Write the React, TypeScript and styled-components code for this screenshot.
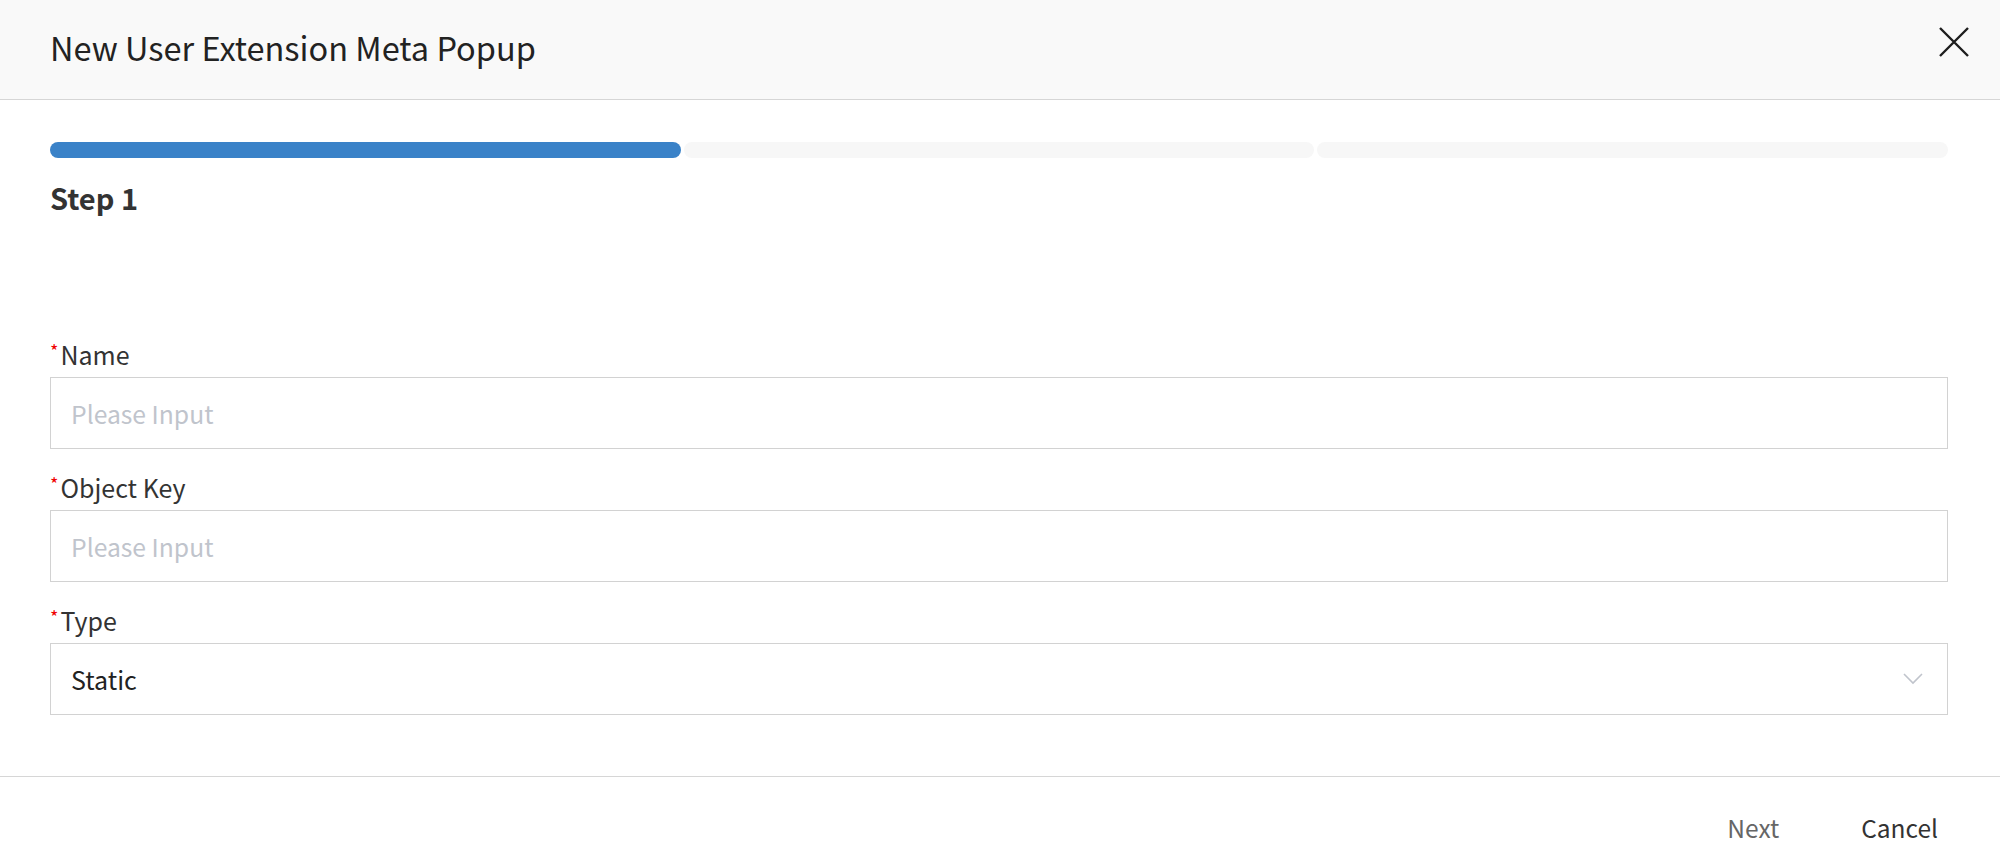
import React from "react";
import styled, { createGlobalStyle } from "styled-components";

const GlobalStyle = createGlobalStyle`
  html, body {
    margin: 0;
    padding: 0;
    background: #ffffff;
  }
  body {
    font-family: "Noto Sans CJK KR", "Noto Sans", sans-serif;
    color: #333333;
  }
  * { box-sizing: border-box; }
`;

const Modal = styled.div`
  width: 100%;
  min-height: 100vh;
  display: flex;
  flex-direction: column;
  background: #ffffff;
`;

const Header = styled.header`
  height: 100px;
  flex: none;
  display: flex;
  align-items: center;
  justify-content: space-between;
  padding: 0 30px 0 50px;
  background: #f9f9f9;
  border-bottom: 1px solid #d6d6d6;
`;

const Title = styled.h1`
  margin: 0 0 5px;
  font-size: 32.5px;
  font-weight: 400;
  color: #222222;
  line-height: 1;
`;

const CloseButton = styled.button`
  width: 32px;
  height: 32px;
  padding: 0;
  border: none;
  background: transparent;
  cursor: pointer;
  display: flex;
  align-items: center;
  justify-content: center;
  margin-top: -16px;
`;

const Body = styled.main`
  padding: 42px 52px 0 50px;
  display: flex;
  flex-direction: column;
`;

const Progress = styled.div`
  display: grid;
  grid-template-columns: repeat(3, 1fr);
  gap: 3px;
`;

const Segment = styled.div<{ $active?: boolean }>`
  height: 16px;
  border-radius: 8px;
  background: ${(p) => (p.$active ? "#3a82c8" : "#f7f7f7")};
`;

const StepTitle = styled.h2`
  margin: 21px 0 0;
  font-size: 29px;
  font-weight: 700;
  color: #333333;
  line-height: 36px;
`;

const Form = styled.form`
  margin-top: 124px;
  display: flex;
  flex-direction: column;
  gap: 23px;
`;

const Field = styled.div`
  display: flex;
  flex-direction: column;
  gap: 8px;
`;

const Label = styled.label`
  font-size: 25px;
  line-height: 30px;
  color: #333333;
  display: flex;
  align-items: flex-start;
`;

const Required = styled.span`
  color: #f00000;
  font-size: 18px;
  line-height: 18px;
  margin-right: 2px;
  margin-top: 2px;
`;

const Input = styled.input`
  height: 72px;
  width: 100%;
  border: 1px solid #d2d2d2;
  border-radius: 0;
  padding: 0 20px;
  font-family: inherit;
  font-size: 24.7px;
  color: #222222;
  outline: none;
  background: #ffffff;
  &::placeholder {
    color: #c0c4cc;
  }
`;

const Select = styled.div`
  height: 72px;
  border: 1px solid #d2d2d2;
  padding: 0 24px 0 20px;
  display: flex;
  align-items: center;
  justify-content: space-between;
  font-size: 25px;
  color: #222222;
  background: #ffffff;
`;

const Footer = styled.footer`
  margin-top: 61px;
  border-top: 1px solid #d6d6d6;
  display: flex;
  justify-content: flex-end;
  gap: 82px;
  padding: 34px 62px 20px 0;
`;

const FooterButton = styled.button<{ $muted?: boolean }>`
  border: none;
  background: transparent;
  padding: 0;
  font-family: inherit;
  font-size: 24.5px;
  line-height: 34px;
  color: ${(p) => (p.$muted ? "#666666" : "#333333")};
  cursor: pointer;
`;

export default function App() {
  return (
    <>
      <GlobalStyle />
      <Modal>
        <Header>
          <Title>New User Extension Meta Popup</Title>
          <CloseButton aria-label="close">
            <svg width="32" height="32" viewBox="0 0 32 32">
              <path d="M2 2 L30 30 M30 2 L2 30" stroke="#1e1e1e" strokeWidth="2.4" fill="none" />
            </svg>
          </CloseButton>
        </Header>
        <Body>
          <Progress>
            <Segment $active />
            <Segment />
            <Segment />
          </Progress>
          <StepTitle>Step 1</StepTitle>
          <Form>
            <Field>
              <Label>
                <Required>*</Required>Name
              </Label>
              <Input placeholder="Please Input" />
            </Field>
            <Field>
              <Label>
                <Required>*</Required>Object Key
              </Label>
              <Input placeholder="Please Input" />
            </Field>
            <Field>
              <Label>
                <Required>*</Required>Type
              </Label>
              <Select>
                <span>Static</span>
                <svg width="20" height="12" viewBox="0 0 20 12">
                  <path d="M1 1 L10 10 L19 1" stroke="#c0c4cc" strokeWidth="1.6" fill="none" />
                </svg>
              </Select>
            </Field>
          </Form>
        </Body>
        <Footer>
          <FooterButton type="button" $muted>
            Next
          </FooterButton>
          <FooterButton type="button">Cancel</FooterButton>
        </Footer>
      </Modal>
    </>
  );
}
